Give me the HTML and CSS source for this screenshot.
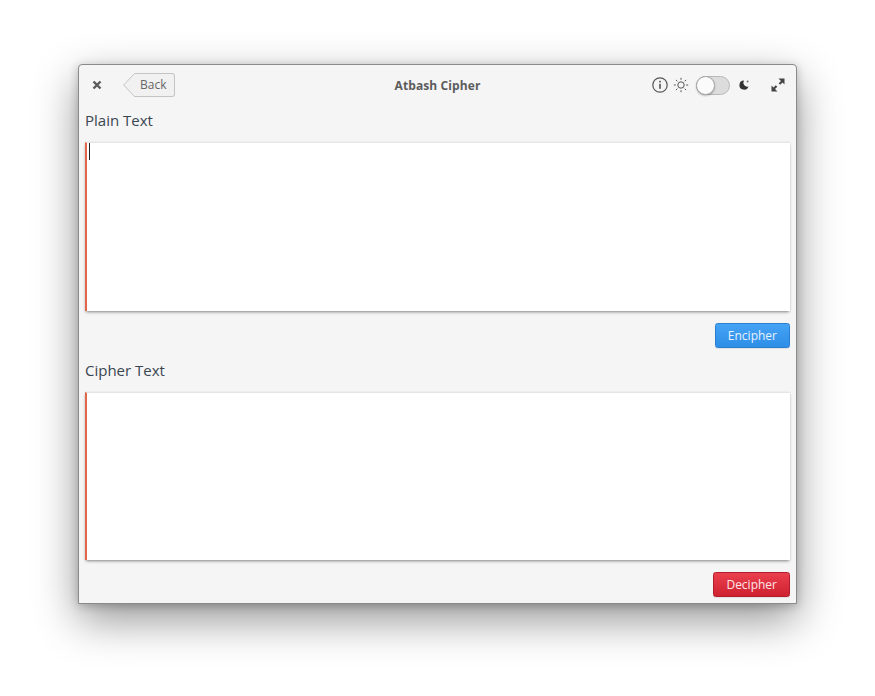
FILE: index.html
```html
<!DOCTYPE html>
<html lang="en">
<head>
<meta charset="utf-8">
<title>Atbash Cipher</title>
<link rel="stylesheet" href="styles.css">
</head>
<body>
<div class="window">
  <header class="titlebar">
    <div class="start">
      <svg class="close" width="10" height="10" viewBox="0 0 10 10"><path d="M1.500 1.500l7 7M8.500 1.500l-7 7" stroke="#5a5a5a" stroke-width="2.400"/></svg>
      <div class="back">
        <svg class="back-tip" width="13" height="24" viewBox="0 0 13 24"><path d="M13 .5H11.500L.7 12 11.500 23.500H13" fill="#f1f1f1" stroke="#c4c4c4"/></svg>
        <span class="back-body">Back</span>
      </div>
    </div>
    <div class="title">Atbash Cipher</div>
    <div class="end">
      <svg class="info" width="16" height="16" viewBox="0 0 16 16"><circle cx="8" cy="8" r="7.200" fill="none" stroke="#555" stroke-width="1.200"/><rect x="7.200" y="6.800" width="1.600" height="5" fill="#555"/><rect x="7.200" y="3.800" width="1.600" height="1.700" fill="#555"/></svg>
      <svg class="sun" width="16" height="16" viewBox="0 0 16 16"><circle cx="8" cy="8" r="3.200" fill="none" stroke="#555" stroke-width="1"/><path d="M8 .8v2M8 13.200v2M.8 8h2M13.200 8h2M2.900 2.900l1.400 1.400M11.700 11.700l1.400 1.400M2.900 13.100l1.400-1.400M11.700 4.300l1.400-1.400" stroke="#555" stroke-width="1"/></svg>
      <div class="switch"><div class="knob"></div></div>
      <svg class="moon" width="12" height="12" viewBox="0 0 12 12"><path d="M6 1.500a4.600 4.600 0 1 0 4.400 6 4 4 0 0 1-4.400-6z" fill="#333"/><circle cx="9.600" cy="2.600" r="1" fill="#777"/></svg>
      <svg class="expand" width="14" height="14" viewBox="0 0 14 14"><path d="M7.500.5h6v6l-2-2-2.300 2.300-1.500-1.500 2.300-2.300zM6.500 13.500h-6v-6l2 2 2.300-2.300 1.500 1.500-2.300 2.300z" fill="#444"/></svg>
    </div>
  </header>
  <main class="content">
    <label class="field-label">Plain Text</label>
    <div class="text-box text-box-first"><span class="caret"></span></div>
    <div class="actions"><button class="btn btn-blue">Encipher</button></div>
    <label class="field-label field-label-second">Cipher Text</label>
    <div class="text-box"></div>
    <div class="actions"><button class="btn btn-red">Decipher</button></div>
  </main>
</div>
</body>
</html>
```
FILE: styles.css
```css
* { box-sizing: border-box; }
html, body { margin: 0; height: 100%; background: #fff; }
body { padding: 64px 0 0 78px; font-family: "Open Sans", sans-serif; overflow: hidden; }
.window {
  width: 719px; height: 540px;
  background: #f5f5f5;
  border: 1px solid #8a8a8a;
  border-radius: 4px 4px 0 0;
  box-shadow: 0 16px 44px rgba(0,0,0,.42), 0 2px 10px rgba(0,0,0,.22);
  display: flex; flex-direction: column;
}
.titlebar { height: 40px; flex: none; display: grid; grid-template-columns: 1fr auto 1fr; align-items: center; padding: 0 11px 0 13px; }
.start { display: flex; align-items: center; }
.close { margin-right: 21px; }
.back { display: flex; height: 24px; }
.back-tip { margin-right: -1px; }
.back-body {
  height: 24px; padding: 0 7px 0 5px; width: 40px; font-size: 12px; line-height: 22px; color: #666;
  background: #f1f1f1; border: 1px solid #c4c4c4; border-left: 0; border-radius: 0 3px 3px 0;
}
.title { font-size: 12px; font-weight: 700; color: #5c5c5c; letter-spacing: .1px; padding-right: 2px; }
.end { display: flex; align-items: center; justify-content: flex-end; }
.sun { margin-left: 5px; }
.switch { width: 34px; height: 19px; margin-left: 7px; border: 1px solid #b9b9b9; border-radius: 10px; background: #dcdcdc; position: relative; }
.knob { position: absolute; left: -1px; top: -1px; width: 19px; height: 19px; border-radius: 50%; background: #fbfbfb; border: 1px solid #a8a8a8; box-shadow: 0 1px 2px rgba(0,0,0,.25); }
.moon { margin-left: 8px; }
.expand { margin-left: 21px; }
.content { flex: 1; padding: 0 6px; display: flex; flex-direction: column; }
.field-label { font-size: 15px; line-height: 20px; color: #3a4650; height: 37px; padding-top: 5px; display: block; }
.field-label-second { height: 36px; padding-top: 4px; }
.text-box { height: 168px; background: #fff; border-left: 2px solid #e2674a; border-top: 1px solid #e6e6e6; box-shadow: 0 2px 3px -1px rgba(0,0,0,.45), 0 0 1px rgba(0,0,0,.14); position: relative; }
.text-box-first { height: 169px; }
.text-box + .actions { margin-top: 12px; }
.caret { position: absolute; left: 2px; top: 0; width: 1px; height: 17px; background: #222; }
.actions { height: 33px; display: flex; justify-content: flex-end; align-items: flex-start; }
.btn { height: 25px; padding: 0 12px; font: 12px "Open Sans", sans-serif; color: #fff; border-radius: 2.500px; box-shadow: 0 1px 1px rgba(0,0,0,.08); }
.btn-blue { border: 1px solid #2a7fce; background: linear-gradient(#45a4f5, #2e8de6); color: #e6f2fd; }
.btn-red { border: 1px solid #b31e2c; background: linear-gradient(#ea3f4d, #cf2231); color: #fde6e8; }
```
